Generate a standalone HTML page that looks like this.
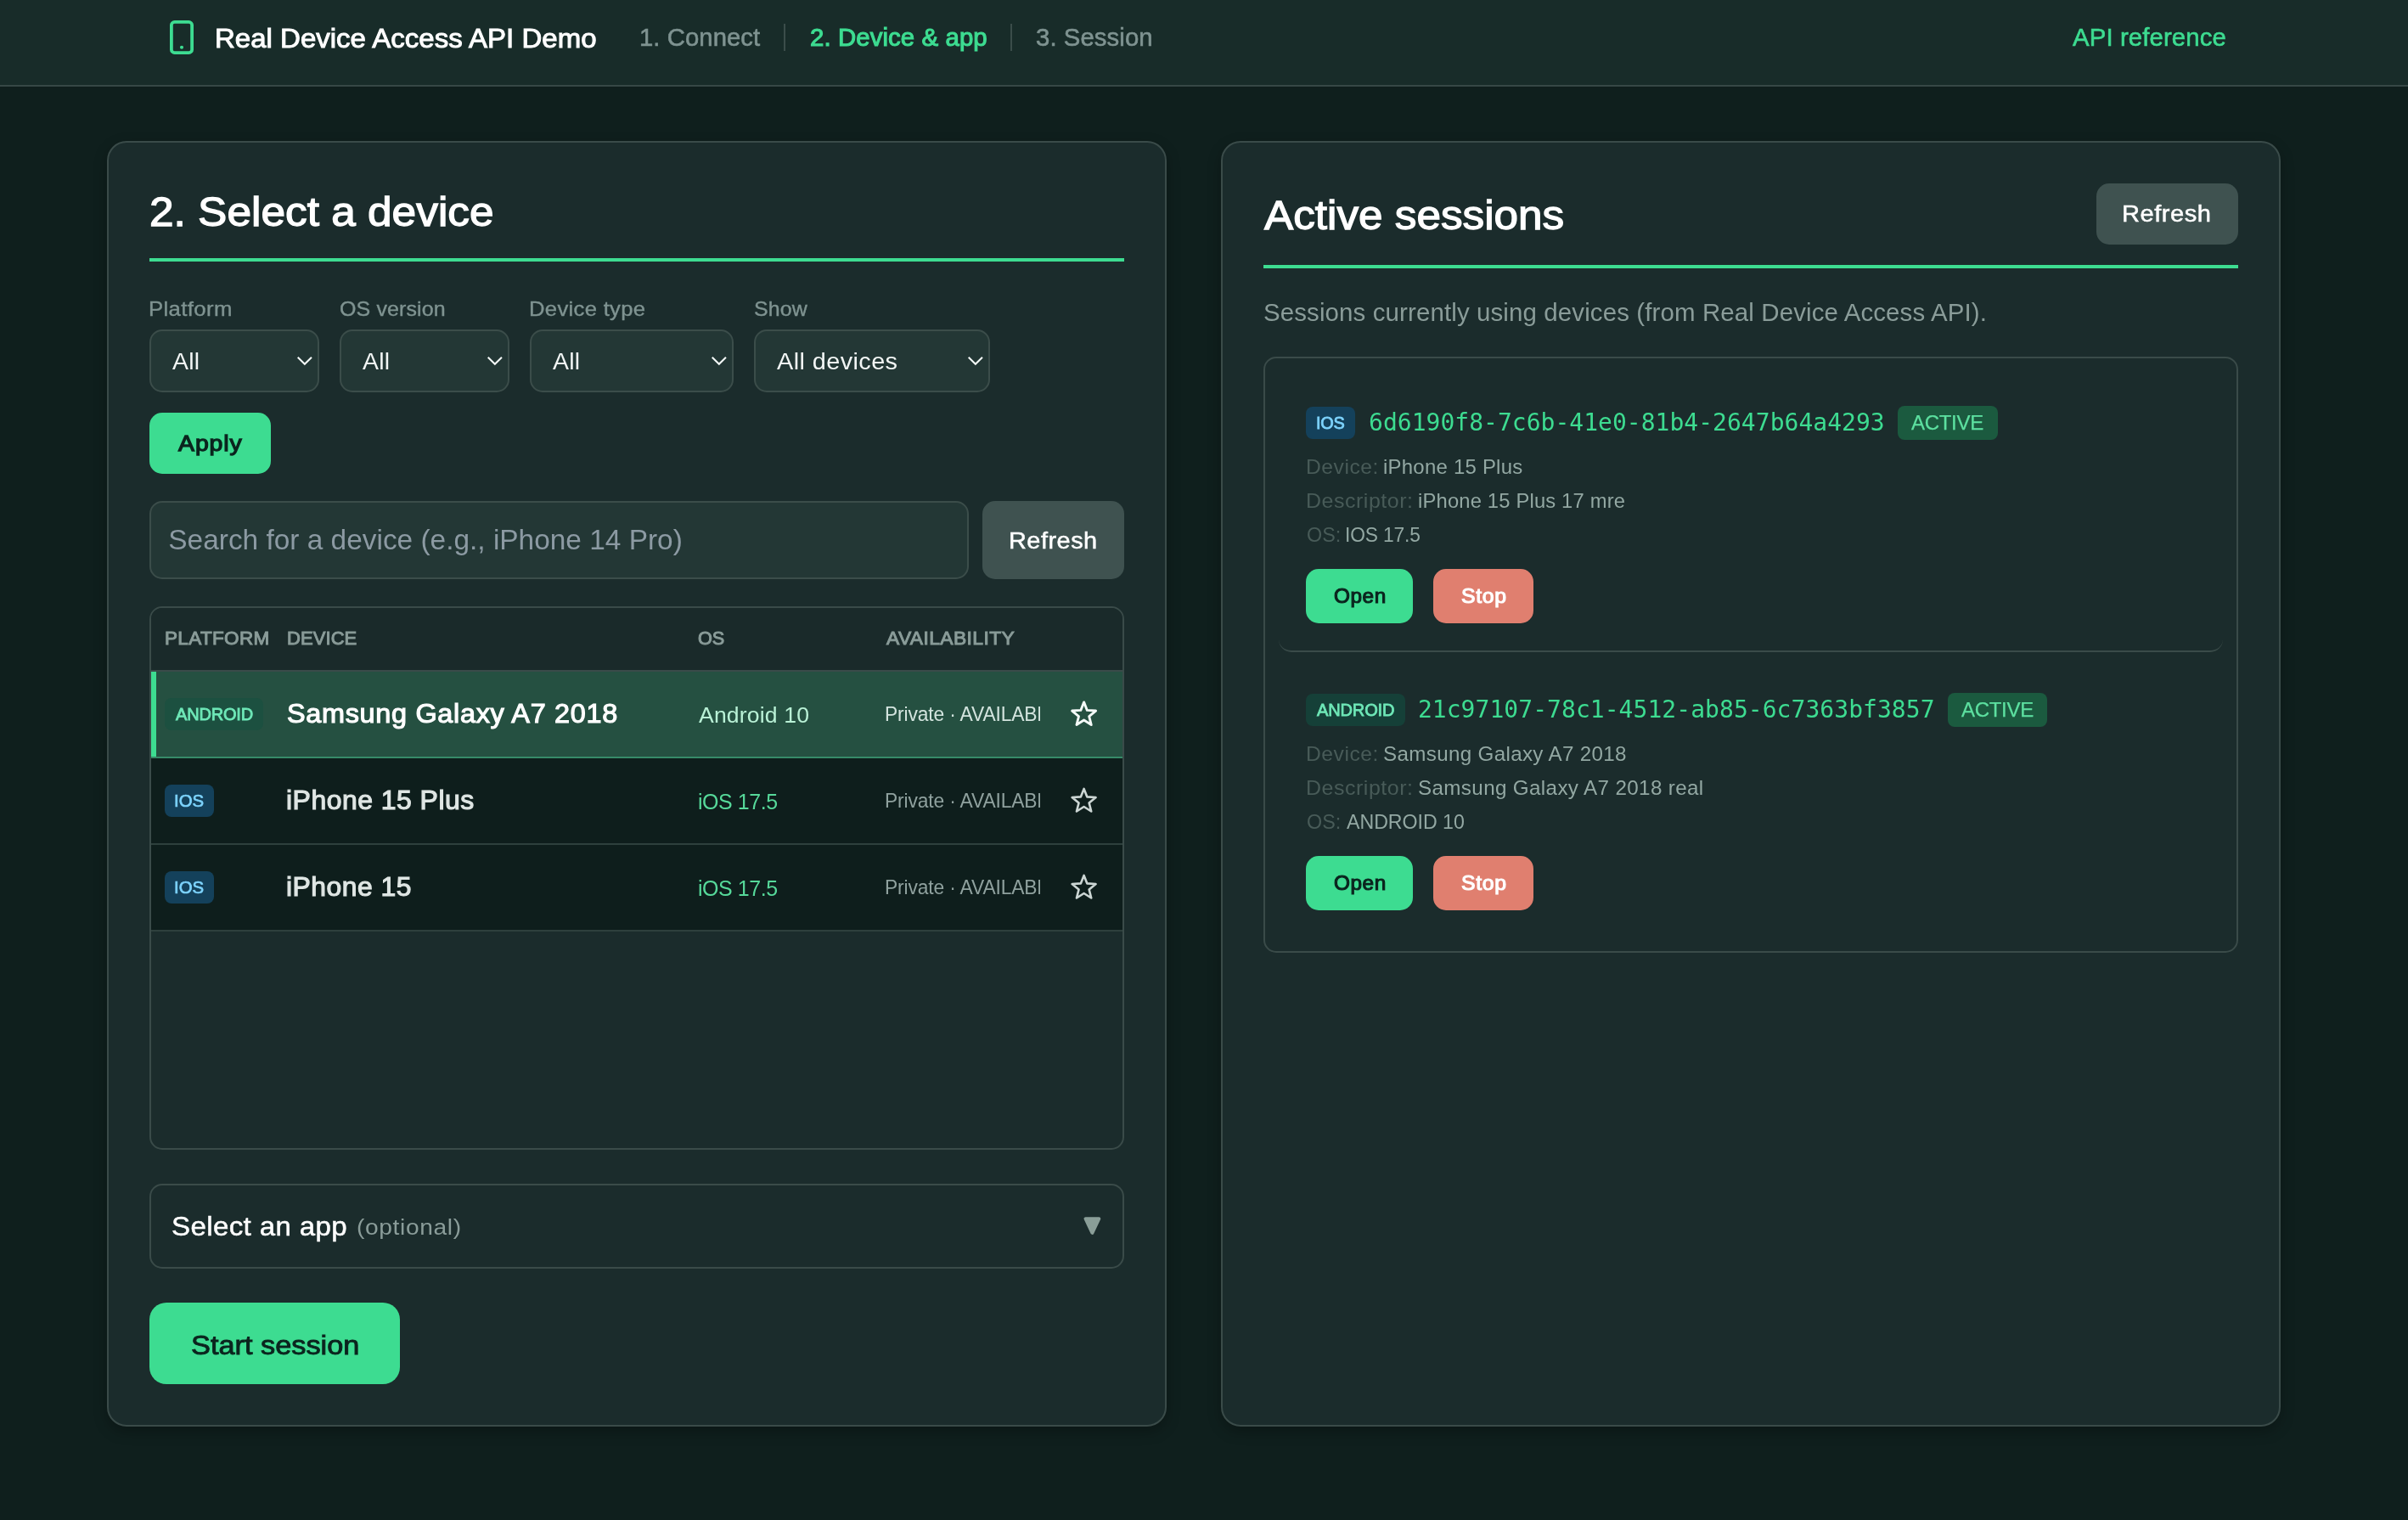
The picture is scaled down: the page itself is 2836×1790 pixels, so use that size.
<!DOCTYPE html>
<html lang="en"><head><meta charset="utf-8"><title>Real Device Access API Demo</title><style>
*{box-sizing:border-box;margin:0;padding:0}
html,body{width:2836px;height:1790px;overflow:hidden;background:#0f1f1d;font-family:'Liberation Sans', sans-serif;}
body{position:relative}
#app{position:absolute;left:0;top:0;width:2836px;height:1790px;will-change:transform}
.a{position:absolute;display:block}
.t{position:absolute;display:block;white-space:nowrap;line-height:1;transform-origin:0 0;font-style:normal;text-decoration:none;-webkit-font-smoothing:antialiased}
button{border:0;font:inherit;cursor:pointer}
i{font-style:normal}
.card{box-shadow:0 6px 16px rgba(0,0,0,.26)}
</style></head><body><div id="app"><header class="a" style="left:0px;top:0px;width:2836px;height:102px;background:#182c29;border-bottom:2px solid #374846;"><svg class="a" style="left:196px;top:20px" width="36" height="48" viewBox="0 0 36 48" fill="none" stroke="#3ddc91" stroke-width="3.8" stroke-linecap="round" stroke-linejoin="round"><rect x="5.9" y="5.9" width="24.2" height="36.2" rx="3.7" ry="3.7"/><circle cx="18" cy="35.8" r="2.05" fill="#3ddc91" stroke="none"/></svg><h1 class="t" style="left:253.15px;top:25.00px;font-size:31.98px;letter-spacing:-0.000px;color:#ffffff;font-weight:400;font-family:'Liberation Sans', sans-serif;-webkit-text-stroke:1.0px #ffffff;transform:scaleX(1.0326);line-height:40px;height:40px;">Real Device Access API Demo</h1><nav><a class="t" style="left:753.29px;top:26.00px;font-size:29.07px;letter-spacing:0.071px;color:#7f9391;font-weight:400;font-family:'Liberation Sans', sans-serif;-webkit-text-stroke:0.6px #7f9391;transform:scaleX(1.0070);line-height:36px;height:36px;">1. Connect</a><i class="a" style="left:923px;top:28px;width:2px;height:32px;background:#3b4d4a;"></i><a class="t" style="left:953.95px;top:26.00px;font-size:29.07px;letter-spacing:0.099px;color:#3ddc91;font-weight:400;font-family:'Liberation Sans', sans-serif;-webkit-text-stroke:1.1px #3ddc91;transform:scaleX(1.0103);line-height:36px;height:36px;">2. Device &amp; app</a><i class="a" style="left:1190px;top:28px;width:2px;height:32px;background:#3b4d4a;"></i><a class="t" style="left:1220.29px;top:26.00px;font-size:29.07px;letter-spacing:0.082px;color:#7f9391;font-weight:400;font-family:'Liberation Sans', sans-serif;-webkit-text-stroke:0.6px #7f9391;transform:scaleX(1.0083);line-height:36px;height:36px;">3. Session</a></nav><a class="t" style="left:2441.30px;top:26.00px;font-size:29.07px;letter-spacing:0.101px;color:#3ddc91;font-weight:400;font-family:'Liberation Sans', sans-serif;-webkit-text-stroke:0.6px #3ddc91;transform:scaleX(1.0104);line-height:36px;height:36px;">API reference</a></header>
<section class="a card" style="left:126px;top:166px;width:1248px;height:1514px;background:#1b2c2c;border:2px solid #3a4b49;border-radius:23px;"><h2 class="t" style="left:47.85px;top:53.00px;font-size:47.97px;letter-spacing:0.000px;color:#ffffff;font-weight:400;font-family:'Liberation Sans', sans-serif;-webkit-text-stroke:1.3px #ffffff;transform:scaleX(1.0711);line-height:57px;height:57px;">2. Select a device</h2><i class="a" style="left:48px;top:136px;width:1148px;height:4px;background:#3ddc91;"></i><label class="t" style="left:46.92px;top:180.00px;font-size:24.71px;letter-spacing:0.346px;color:#7f9391;font-weight:400;font-family:'Liberation Sans', sans-serif;-webkit-text-stroke:0.4px #7f9391;transform:scaleX(1.0426);line-height:31px;height:31px;">Platform</label><div class="a sel" style="left:48px;top:220px;width:200px;height:74px;background:#233735;border:2px solid #3b4d4a;border-radius:15px;"><span class="t" style="left:24.80px;top:18.00px;font-size:27.62px;letter-spacing:0.282px;color:#f2f6f5;font-weight:400;font-family:'Liberation Sans', sans-serif;transform:scaleX(1.0295);line-height:35px;height:35px;">All</span><svg class="a" style="left:171px;top:29px" width="20" height="13" viewBox="0 0 20 13" fill="none" stroke="#f3f8f7" stroke-width="2.1" stroke-linecap="butt" stroke-linejoin="miter"><path d="M1.74 1.74 L9.85 9.82 L17.96 1.74"/></svg></div><label class="t" style="left:271.89px;top:180.00px;font-size:24.71px;letter-spacing:0.108px;color:#7f9391;font-weight:400;font-family:'Liberation Sans', sans-serif;-webkit-text-stroke:0.4px #7f9391;transform:scaleX(1.0122);line-height:31px;height:31px;">OS version</label><div class="a sel" style="left:272px;top:220px;width:200px;height:74px;background:#233735;border:2px solid #3b4d4a;border-radius:15px;"><span class="t" style="left:25.00px;top:18.00px;font-size:27.62px;letter-spacing:0.282px;color:#f2f6f5;font-weight:400;font-family:'Liberation Sans', sans-serif;transform:scaleX(1.0295);line-height:35px;height:35px;">All</span><svg class="a" style="left:171px;top:29px" width="20" height="13" viewBox="0 0 20 13" fill="none" stroke="#f3f8f7" stroke-width="2.1" stroke-linecap="butt" stroke-linejoin="miter"><path d="M1.74 1.74 L9.85 9.82 L17.96 1.74"/></svg></div><label class="t" style="left:495.33px;top:180.00px;font-size:24.71px;letter-spacing:0.304px;color:#7f9391;font-weight:400;font-family:'Liberation Sans', sans-serif;-webkit-text-stroke:0.4px #7f9391;transform:scaleX(1.0373);line-height:31px;height:31px;">Device type</label><div class="a sel" style="left:496px;top:220px;width:240px;height:74px;background:#233735;border:2px solid #3b4d4a;border-radius:15px;"><span class="t" style="left:24.70px;top:18.00px;font-size:27.62px;letter-spacing:0.282px;color:#f2f6f5;font-weight:400;font-family:'Liberation Sans', sans-serif;transform:scaleX(1.0295);line-height:35px;height:35px;">All</span><svg class="a" style="left:211px;top:29px" width="20" height="13" viewBox="0 0 20 13" fill="none" stroke="#f3f8f7" stroke-width="2.1" stroke-linecap="butt" stroke-linejoin="miter"><path d="M1.74 1.74 L9.85 9.82 L17.96 1.74"/></svg></div><label class="t" style="left:759.79px;top:180.00px;font-size:24.71px;letter-spacing:0.125px;color:#7f9391;font-weight:400;font-family:'Liberation Sans', sans-serif;-webkit-text-stroke:0.4px #7f9391;transform:scaleX(1.0092);line-height:31px;height:31px;">Show</label><div class="a sel" style="left:760px;top:220px;width:278px;height:74px;background:#233735;border:2px solid #3b4d4a;border-radius:15px;"><span class="t" style="left:25.20px;top:18.00px;font-size:27.62px;letter-spacing:0.384px;color:#f2f6f5;font-weight:400;font-family:'Liberation Sans', sans-serif;transform:scaleX(1.0459);line-height:35px;height:35px;">All devices</span><svg class="a" style="left:249px;top:29px" width="20" height="13" viewBox="0 0 20 13" fill="none" stroke="#f3f8f7" stroke-width="2.1" stroke-linecap="butt" stroke-linejoin="miter"><path d="M1.74 1.74 L9.85 9.82 L17.96 1.74"/></svg></div><button class="a" style="left:48px;top:318px;width:143px;height:72px;background:#3ddc91;border-radius:15px;"><span class="t" style="left:33.71px;top:19.00px;font-size:26.16px;letter-spacing:0.880px;color:#0b241e;font-weight:400;font-family:'Liberation Sans', sans-serif;-webkit-text-stroke:1.3px #0b241e;transform:scaleX(1.0847);line-height:34px;height:34px;">Apply</span></button><div class="a" style="left:48px;top:422px;width:965px;height:92px;background:#233735;border:2px solid #3b4d4a;border-radius:15px;"><span class="t" style="left:20.30px;top:23.00px;font-size:33.43px;letter-spacing:-0.004px;color:#8c9aa3;font-weight:400;font-family:'Liberation Sans', sans-serif;line-height:41px;height:41px;">Search for a device (e.g., iPhone 14 Pro)</span></div><button class="a" style="left:1029px;top:422px;width:167px;height:92px;background:#3f5250;border-radius:15px;"><span class="t" style="left:30.97px;top:29.00px;font-size:27.62px;letter-spacing:0.470px;color:#ffffff;font-weight:400;font-family:'Liberation Sans', sans-serif;-webkit-text-stroke:0.5px #ffffff;transform:scaleX(1.0472);line-height:35px;height:35px;">Refresh</span></button><div class="a" style="left:48px;top:546px;width:1148px;height:640px;border:2px solid #3a4b49;border-radius:15px;overflow:hidden;"><div class="a" style="left:0px;top:0px;width:1144px;height:75px;border-bottom:2px solid #3a4b49;background:#1a2a2a;"><span class="t" style="left:15.78px;top:21.00px;font-size:21.8px;letter-spacing:0.338px;color:#8a9c99;font-weight:400;font-family:'Liberation Sans', sans-serif;-webkit-text-stroke:1.0px #8a9c99;transform:scaleX(1.0316);line-height:29px;height:29px;">PLATFORM</span><span class="t" style="left:160.20px;top:21.00px;font-size:21.8px;letter-spacing:0.086px;color:#8a9c99;font-weight:400;font-family:'Liberation Sans', sans-serif;-webkit-text-stroke:1.0px #8a9c99;transform:scaleX(1.0081);line-height:29px;height:29px;">DEVICE</span><span class="t" style="left:644.00px;top:21.00px;font-size:21.8px;letter-spacing:-0.102px;color:#8a9c99;font-weight:400;font-family:'Liberation Sans', sans-serif;-webkit-text-stroke:1.0px #8a9c99;transform:scaleX(0.9951);line-height:29px;height:29px;">OS</span><span class="t" style="left:865.52px;top:21.00px;font-size:21.8px;letter-spacing:0.386px;color:#8a9c99;font-weight:400;font-family:'Liberation Sans', sans-serif;-webkit-text-stroke:1.0px #8a9c99;transform:scaleX(1.0472);line-height:29px;height:29px;">AVAILABILITY</span></div><div class="a row" style="left:0px;top:75px;width:1144px;height:102px;background:#255041;border-bottom:2px solid #378a68;"><i class="a" style="left:0px;top:0px;width:6px;height:100px;background:#3ddc91;"></i><span class="a" style="left:16px;top:30.8px;width:116px;height:38.2px;background:#1c5040;border-radius:8px;"><b class="t" style="left:13.04px;top:6.20px;font-size:20.35px;letter-spacing:-0.185px;color:#6ee7b7;font-weight:400;font-family:'Liberation Sans', sans-serif;-webkit-text-stroke:0.9px #6ee7b7;transform:scaleX(0.9826);line-height:26px;height:26px;">ANDROID</b></span><strong class="t" style="left:160.22px;top:30.00px;font-size:30.52px;letter-spacing:0.654px;color:#ffffff;font-weight:400;font-family:'Liberation Sans', sans-serif;-webkit-text-stroke:1.1px #ffffff;transform:scaleX(1.0618);line-height:38px;height:38px;">Samsung Galaxy A7 2018</strong><span class="t" style="left:644.50px;top:34.00px;font-size:26.16px;letter-spacing:0.150px;color:#b9f1d6;font-weight:400;font-family:'Liberation Sans', sans-serif;transform:scaleX(1.0163);line-height:34px;height:34px;">Android 10</span><span class="a" style="left:862px;top:20px;width:185.4px;height:60px;overflow:hidden;"><span class="t" style="left:1.62px;top:15.00px;font-size:23.26px;letter-spacing:-0.145px;color:#d3e4de;font-weight:400;font-family:'Liberation Sans', sans-serif;transform:scaleX(0.9815);line-height:30px;height:30px;">Private · AVAILABLE</span></span><svg class="a" style="left:1080.5px;top:31.3px" width="36" height="36" viewBox="0 0 36 36" fill="none" stroke="#f4f9f7" stroke-width="2.9" stroke-linejoin="round"><polygon points="17.60,4.90 21.36,14.42 31.58,15.06 23.69,21.58 26.24,31.49 17.60,26.00 8.96,31.49 11.51,21.58 3.62,15.06 13.84,14.42"/></svg></div><div class="a row" style="left:0px;top:177px;width:1144px;height:102px;background:#0e1e1c;border-bottom:2px solid #2e403d;"><span class="a" style="left:16px;top:30.8px;width:57.8px;height:38.2px;background:#14415b;border-radius:8px;"><b class="t" style="left:11.15px;top:6.20px;font-size:20.35px;letter-spacing:0.025px;color:#7dd3fc;font-weight:400;font-family:'Liberation Sans', sans-serif;-webkit-text-stroke:0.7px #7dd3fc;transform:scaleX(1.0022);line-height:26px;height:26px;">IOS</b></span><strong class="t" style="left:159.18px;top:30.00px;font-size:30.52px;letter-spacing:0.467px;color:#dfe6e4;font-weight:400;font-family:'Liberation Sans', sans-serif;-webkit-text-stroke:1.1px #dfe6e4;transform:scaleX(1.0467);line-height:38px;height:38px;">iPhone 15 Plus</strong><span class="t" style="left:643.55px;top:34.00px;font-size:26.16px;letter-spacing:-0.457px;color:#56d99a;font-weight:400;font-family:'Liberation Sans', sans-serif;transform:scaleX(0.9543);line-height:34px;height:34px;">iOS 17.5</span><span class="a" style="left:862px;top:20px;width:185.4px;height:60px;overflow:hidden;"><span class="t" style="left:1.62px;top:15.00px;font-size:23.26px;letter-spacing:-0.145px;color:#8fa19e;font-weight:400;font-family:'Liberation Sans', sans-serif;transform:scaleX(0.9815);line-height:30px;height:30px;">Private · AVAILABLE</span></span><svg class="a" style="left:1080.5px;top:31.3px" width="36" height="36" viewBox="0 0 36 36" fill="none" stroke="#ccd6d4" stroke-width="2.6" stroke-linejoin="round"><polygon points="17.60,4.90 21.36,14.42 31.58,15.06 23.69,21.58 26.24,31.49 17.60,26.00 8.96,31.49 11.51,21.58 3.62,15.06 13.84,14.42"/></svg></div><div class="a row" style="left:0px;top:279px;width:1144px;height:102px;background:#0e1e1c;border-bottom:2px solid #2e403d;"><span class="a" style="left:16px;top:30.8px;width:57.8px;height:38.2px;background:#14415b;border-radius:8px;"><b class="t" style="left:11.15px;top:6.20px;font-size:20.35px;letter-spacing:0.025px;color:#7dd3fc;font-weight:400;font-family:'Liberation Sans', sans-serif;-webkit-text-stroke:0.7px #7dd3fc;transform:scaleX(1.0022);line-height:26px;height:26px;">IOS</b></span><strong class="t" style="left:159.19px;top:30.00px;font-size:30.52px;letter-spacing:0.476px;color:#dfe6e4;font-weight:400;font-family:'Liberation Sans', sans-serif;-webkit-text-stroke:1.1px #dfe6e4;transform:scaleX(1.0440);line-height:38px;height:38px;">iPhone 15</strong><span class="t" style="left:643.55px;top:34.00px;font-size:26.16px;letter-spacing:-0.457px;color:#56d99a;font-weight:400;font-family:'Liberation Sans', sans-serif;transform:scaleX(0.9543);line-height:34px;height:34px;">iOS 17.5</span><span class="a" style="left:862px;top:20px;width:185.4px;height:60px;overflow:hidden;"><span class="t" style="left:1.62px;top:15.00px;font-size:23.26px;letter-spacing:-0.145px;color:#8fa19e;font-weight:400;font-family:'Liberation Sans', sans-serif;transform:scaleX(0.9815);line-height:30px;height:30px;">Private · AVAILABLE</span></span><svg class="a" style="left:1080.5px;top:31.3px" width="36" height="36" viewBox="0 0 36 36" fill="none" stroke="#ccd6d4" stroke-width="2.6" stroke-linejoin="round"><polygon points="17.60,4.90 21.36,14.42 31.58,15.06 23.69,21.58 26.24,31.49 17.60,26.00 8.96,31.49 11.51,21.58 3.62,15.06 13.84,14.42"/></svg></div></div><div class="a" style="left:48px;top:1226px;width:1148px;height:100px;border:2px solid #3a4b49;border-radius:15px;"><span class="t" style="left:24.22px;top:28.00px;font-size:31.98px;letter-spacing:0.360px;color:#ffffff;font-weight:400;font-family:'Liberation Sans', sans-serif;-webkit-text-stroke:0.5px #ffffff;transform:scaleX(1.0345);line-height:40px;height:40px;">Select an app</span><span class="t" style="left:241.62px;top:32.00px;font-size:26.16px;letter-spacing:0.576px;color:#8a9c99;font-weight:400;font-family:'Liberation Sans', sans-serif;transform:scaleX(1.0781);line-height:34px;height:34px;">(optional)</span><svg class="a" style="left:1097px;top:35.90000000000009px" width="22" height="23" viewBox="0 0 22 23"><path d="M3.5 3.2 H19.3 L11.4 19.8 Z" fill="#8a9e98" stroke="#8a9e98" stroke-width="4" stroke-linejoin="round"/></svg></div><button class="a" style="left:48px;top:1366px;width:295px;height:96px;background:#3ddc91;border-radius:20px;"><span class="t" style="left:48.88px;top:31.00px;font-size:30.52px;letter-spacing:-0.000px;color:#0b241e;font-weight:400;font-family:'Liberation Sans', sans-serif;-webkit-text-stroke:0.9px #0b241e;transform:scaleX(1.1244);line-height:38px;height:38px;">Start session</span></button></section>
<section class="a card" style="left:1438px;top:166px;width:1248px;height:1514px;background:#1b2c2c;border:2px solid #3a4b49;border-radius:23px;"><h2 class="t" style="left:49.19px;top:57.00px;font-size:47.97px;letter-spacing:0.000px;color:#ffffff;font-weight:400;font-family:'Liberation Sans', sans-serif;-webkit-text-stroke:1.3px #ffffff;transform:scaleX(1.0683);line-height:57px;height:57px;">Active sessions</h2><button class="a" style="left:1029px;top:48px;width:167px;height:72px;background:#3f5250;border-radius:15px;"><span class="t" style="left:30.46px;top:18.00px;font-size:27.62px;letter-spacing:0.518px;color:#ffffff;font-weight:400;font-family:'Liberation Sans', sans-serif;-webkit-text-stroke:0.5px #ffffff;transform:scaleX(1.0523);line-height:35px;height:35px;">Refresh</span></button><i class="a" style="left:48px;top:144px;width:1148px;height:4px;background:#3ddc91;"></i><p class="t" style="left:47.99px;top:182.00px;font-size:29.07px;letter-spacing:0.117px;color:#8a9c99;font-weight:400;font-family:'Liberation Sans', sans-serif;transform:scaleX(1.0133);line-height:36px;height:36px;">Sessions currently using devices (from Real Device Access API).</p><div class="a" style="left:48px;top:252px;width:1148px;height:702px;border:2px solid #3a4b49;border-radius:15px;"><article class="a" style="left:16px;top:16px;width:1112px;height:330px;border-bottom:2px solid #3a4b49;border-radius:15px;"><span class="a" style="left:32px;top:41px;width:58px;height:37.6px;background:#14415b;border-radius:8px;"><b class="t" style="left:11.91px;top:6.00px;font-size:20.35px;letter-spacing:-0.240px;color:#7dd3fc;font-weight:400;font-family:'Liberation Sans', sans-serif;-webkit-text-stroke:0.8px #7dd3fc;transform:scaleX(0.9794);line-height:26px;height:26px;">IOS</b></span><code class="t" style="left:106.00px;top:41.00px;font-size:27.98px;letter-spacing:0.041px;color:#3ddc91;font-weight:400;font-family:'DejaVu Sans Mono', 'Liberation Mono', monospace;line-height:37px;height:37px;">6d6190f8-7c6b-41e0-81b4-2647b64a4293</code><span class="a" style="left:729.4px;top:40px;width:117.6px;height:39.8px;background:#1b5a3f;border-radius:8px;"><span class="t" style="left:16.02px;top:4.00px;font-size:24.71px;letter-spacing:-0.329px;color:#5de0a0;font-weight:400;font-family:'Liberation Sans', sans-serif;-webkit-text-stroke:0.25px #5de0a0;transform:scaleX(0.9731);line-height:31px;height:31px;">ACTIVE</span></span><span class="t" style="left:31.94px;top:97.00px;font-size:23.26px;letter-spacing:0.480px;color:#485b58;font-weight:400;font-family:'Liberation Sans', sans-serif;transform:scaleX(1.0610);line-height:30px;height:30px;">Device:</span><span class="t" style="left:122.97px;top:97.00px;font-size:23.26px;letter-spacing:0.231px;color:#93a8a3;font-weight:400;font-family:'Liberation Sans', sans-serif;transform:scaleX(1.0299);line-height:30px;height:30px;">iPhone 15 Plus</span><span class="t" style="left:31.93px;top:137.00px;font-size:23.26px;letter-spacing:0.498px;color:#485b58;font-weight:400;font-family:'Liberation Sans', sans-serif;transform:scaleX(1.0729);line-height:30px;height:30px;">Descriptor:</span><span class="t" style="left:163.98px;top:137.00px;font-size:23.26px;letter-spacing:0.170px;color:#93a8a3;font-weight:400;font-family:'Liberation Sans', sans-serif;transform:scaleX(1.0224);line-height:30px;height:30px;">iPhone 15 Plus 17 mre</span><span class="t" style="left:32.50px;top:177.00px;font-size:23.26px;letter-spacing:0.041px;color:#485b58;font-weight:400;font-family:'Liberation Sans', sans-serif;transform:scaleX(1.0033);line-height:30px;height:30px;">OS:</span><span class="t" style="left:78.44px;top:177.00px;font-size:23.26px;letter-spacing:-0.165px;color:#93a8a3;font-weight:400;font-family:'Liberation Sans', sans-serif;transform:scaleX(0.9809);line-height:30px;height:30px;">IOS 17.5</span><button class="a" style="left:32px;top:232px;width:126.2px;height:64px;background:#3ddc91;border-radius:15px;"><span class="t" style="left:32.53px;top:17.00px;font-size:23.26px;letter-spacing:0.543px;color:#0b241e;font-weight:400;font-family:'Liberation Sans', sans-serif;-webkit-text-stroke:1.1px #0b241e;transform:scaleX(1.0455);line-height:30px;height:30px;">Open</span></button><button class="a" style="left:181.8px;top:232px;width:118.4px;height:64px;background:#e07f6f;border-radius:15px;"><span class="t" style="left:32.92px;top:17.00px;font-size:23.26px;letter-spacing:0.639px;color:#ffffff;font-weight:400;font-family:'Liberation Sans', sans-serif;-webkit-text-stroke:1.1px #ffffff;transform:scaleX(1.0651);line-height:30px;height:30px;">Stop</span></button></article><article class="a" style="left:16px;top:354px;width:1112px;height:330px;"><span class="a" style="left:32px;top:41px;width:116.6px;height:37.6px;background:#154038;border-radius:8px;"><b class="t" style="left:13.09px;top:6.00px;font-size:20.35px;letter-spacing:-0.157px;color:#6ee7b7;font-weight:400;font-family:'Liberation Sans', sans-serif;-webkit-text-stroke:0.8px #6ee7b7;transform:scaleX(0.9852);line-height:26px;height:26px;">ANDROID</b></span><code class="t" style="left:163.90px;top:41.00px;font-size:27.98px;letter-spacing:0.070px;color:#3ddc91;font-weight:400;font-family:'DejaVu Sans Mono', 'Liberation Mono', monospace;line-height:37px;height:37px;">21c97107-78c1-4512-ab85-6c7363bf3857</code><span class="a" style="left:787.8px;top:40px;width:117.6px;height:39.8px;background:#1b5a3f;border-radius:8px;"><span class="t" style="left:16.02px;top:4.00px;font-size:24.71px;letter-spacing:-0.329px;color:#5de0a0;font-weight:400;font-family:'Liberation Sans', sans-serif;-webkit-text-stroke:0.25px #5de0a0;transform:scaleX(0.9731);line-height:31px;height:31px;">ACTIVE</span></span><span class="t" style="left:31.94px;top:97.00px;font-size:23.26px;letter-spacing:0.480px;color:#485b58;font-weight:400;font-family:'Liberation Sans', sans-serif;transform:scaleX(1.0610);line-height:30px;height:30px;">Device:</span><span class="t" style="left:122.96px;top:97.00px;font-size:23.26px;letter-spacing:0.324px;color:#93a8a3;font-weight:400;font-family:'Liberation Sans', sans-serif;transform:scaleX(1.0396);line-height:30px;height:30px;">Samsung Galaxy A7 2018</span><span class="t" style="left:31.93px;top:137.00px;font-size:23.26px;letter-spacing:0.498px;color:#485b58;font-weight:400;font-family:'Liberation Sans', sans-serif;transform:scaleX(1.0729);line-height:30px;height:30px;">Descriptor:</span><span class="t" style="left:163.96px;top:137.00px;font-size:23.26px;letter-spacing:0.326px;color:#93a8a3;font-weight:400;font-family:'Liberation Sans', sans-serif;transform:scaleX(1.0424);line-height:30px;height:30px;">Samsung Galaxy A7 2018 real</span><span class="t" style="left:32.50px;top:177.00px;font-size:23.26px;letter-spacing:0.041px;color:#485b58;font-weight:400;font-family:'Liberation Sans', sans-serif;transform:scaleX(1.0033);line-height:30px;height:30px;">OS:</span><span class="t" style="left:80.40px;top:177.00px;font-size:23.26px;letter-spacing:-0.031px;color:#93a8a3;font-weight:400;font-family:'Liberation Sans', sans-serif;transform:scaleX(0.9970);line-height:30px;height:30px;">ANDROID 10</span><button class="a" style="left:32px;top:232px;width:126.2px;height:64px;background:#3ddc91;border-radius:15px;"><span class="t" style="left:32.53px;top:17.00px;font-size:23.26px;letter-spacing:0.543px;color:#0b241e;font-weight:400;font-family:'Liberation Sans', sans-serif;-webkit-text-stroke:1.1px #0b241e;transform:scaleX(1.0455);line-height:30px;height:30px;">Open</span></button><button class="a" style="left:181.8px;top:232px;width:118.4px;height:64px;background:#e07f6f;border-radius:15px;"><span class="t" style="left:32.92px;top:17.00px;font-size:23.26px;letter-spacing:0.639px;color:#ffffff;font-weight:400;font-family:'Liberation Sans', sans-serif;-webkit-text-stroke:1.1px #ffffff;transform:scaleX(1.0651);line-height:30px;height:30px;">Stop</span></button></article></div></section></div></body></html>
